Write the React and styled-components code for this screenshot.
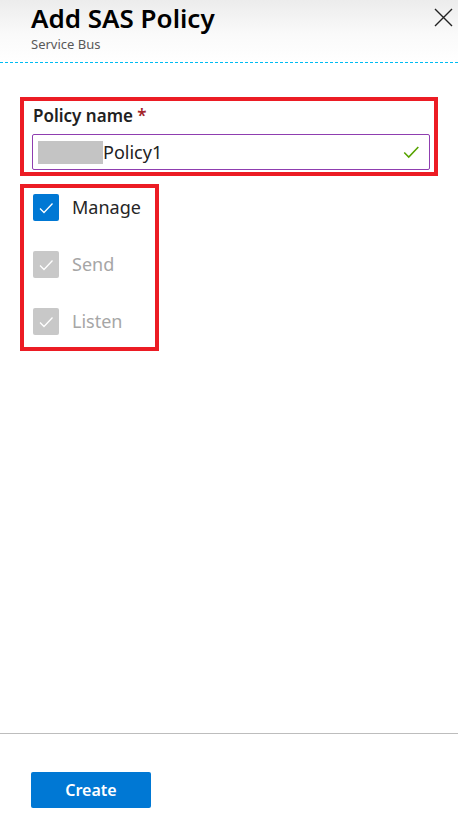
import React from 'react';
import styled, { createGlobalStyle } from 'styled-components';

const GlobalStyle = createGlobalStyle`
  html, body {
    margin: 0;
    padding: 0;
    background: #fff;
  }
  body {
    font-family: "Noto Sans", "Open Sans", sans-serif;
  }
`;

const Blade = styled.div`
  display: flex;
  flex-direction: column;
  width: 458px;
  height: 835px;
  background: #fff;
`;

const Header = styled.div`
  position: relative;
  display: flex;
  justify-content: space-between;
  align-items: flex-start;
  height: 63px;
  padding: 0 5px 0 31px;
  background: linear-gradient(to bottom, #ececec 0%, #fafafa 55%, #ffffff 100%);
  box-sizing: border-box;
  &::after {
    content: '';
    position: absolute;
    left: 0;
    right: 0;
    bottom: 0;
    height: 1px;
    background: repeating-linear-gradient(to right, #00bcf2 0 3px, transparent 3px 5px);
  }
`;

const Titles = styled.div`
  display: flex;
  flex-direction: column;
`;

const Title = styled.h1`
  margin: 1px 0 0;
  font-size: 26px;
  font-weight: 600;
  line-height: 35px;
  color: #000;
`;

const Subtitle = styled.div`
  font-size: 13px;
  line-height: 17px;
  color: #595959;
`;

const CloseButton = styled.button`
  display: flex;
  border: none;
  background: transparent;
  padding: 0;
  margin-top: 8px;
  cursor: pointer;
`;

const Content = styled.div`
  flex: 1;
  display: flex;
  flex-direction: column;
  align-items: flex-start;
  padding: 34px 0 0 20px;
  gap: 8px;
`;

const Highlight = styled.div`
  border: 4px solid #ec1c24;
  box-sizing: border-box;
  width: ${p => p.$width}px;
  height: ${p => p.$height}px;
  padding: ${p => p.$pad};
`;

const Label = styled.div`
  font-size: 17px;
  font-weight: 600;
  line-height: 23px;
  color: #212121;
  margin-left: 1px;
`;

const Required = styled.span`
  color: #a4262c;
`;

const Field = styled.div`
  display: flex;
  align-items: center;
  margin-top: 7px;
  height: 36px;
  width: 398px;
  box-sizing: border-box;
  border: 1px solid #8f3eb0;
  border-radius: 2px;
  padding: 0 9px 0 5px;
`;

const Redacted = styled.span`
  width: 65px;
  height: 23px;
  background: #c4c4c4;
`;

const Value = styled.span`
  flex: 1;
  font-size: 18px;
  color: #222;
`;

const CheckList = styled.div`
  display: flex;
  flex-direction: column;
  gap: 30px;
`;

const CheckRow = styled.label`
  display: flex;
  align-items: center;
  gap: 13px;
  font-size: 18px;
  line-height: 27px;
  color: ${p => (p.$disabled ? '#a6a6a6' : '#262626')};
`;

const Box = styled.span`
  display: flex;
  align-items: center;
  justify-content: center;
  width: 26px;
  height: 27px;
  border-radius: 2px;
  background: ${p => (p.$disabled ? '#c8c8c8' : '#0078d4')};
`;

const Footer = styled.div`
  height: 102px;
  box-sizing: border-box;
  border-top: 1px solid #bdbdbd;
  padding: 38px 0 0 31px;
`;

const CreateButton = styled.button`
  width: 120px;
  height: 36px;
  border: none;
  border-radius: 2px;
  background: #0078d4;
  color: #fff;
  font-family: inherit;
  font-size: 16px;
  font-weight: 600;
  cursor: pointer;
`;

const Tick = ({ color, size = 16, width = 1.4 }) => (
  <svg width={size} height={size} viewBox="0 0 16 16" fill="none">
    <path d="M2 8.5 L6 12.5 L14.5 3.5" stroke={color} strokeWidth={width} />
  </svg>
);

const permissions = [
  { name: 'Manage', disabled: false },
  { name: 'Send', disabled: true },
  { name: 'Listen', disabled: true },
];

const App = () => (
  <>
    <GlobalStyle />
    <Blade>
      <Header>
        <Titles>
          <Title>Add SAS Policy</Title>
          <Subtitle>Service Bus</Subtitle>
        </Titles>
        <CloseButton aria-label="Close">
          <svg width="19" height="19" viewBox="0 0 19 19">
            <path d="M1 1 L18 18 M18 1 L1 18" stroke="#222" strokeWidth="1.4" />
          </svg>
        </CloseButton>
      </Header>
      <Content>
        <Highlight $width={418} $height={79} $pad="3px 0 0 8px">
          <Label>
            Policy name <Required>*</Required>
          </Label>
          <Field>
            <Redacted />
            <Value>Policy1</Value>
            <Tick color="#57a300" size={18} />
          </Field>
        </Highlight>
        <Highlight $width={139} $height={167} $pad="6px 0 0 9px">
          <CheckList>
            {permissions.map(p => (
              <CheckRow key={p.name} $disabled={p.disabled}>
                <Box $disabled={p.disabled}>
                  <Tick color="#fff" size={16} width={1.3} />
                </Box>
                {p.name}
              </CheckRow>
            ))}
          </CheckList>
        </Highlight>
      </Content>
      <Footer>
        <CreateButton>Create</CreateButton>
      </Footer>
    </Blade>
  </>
);

export default App;
